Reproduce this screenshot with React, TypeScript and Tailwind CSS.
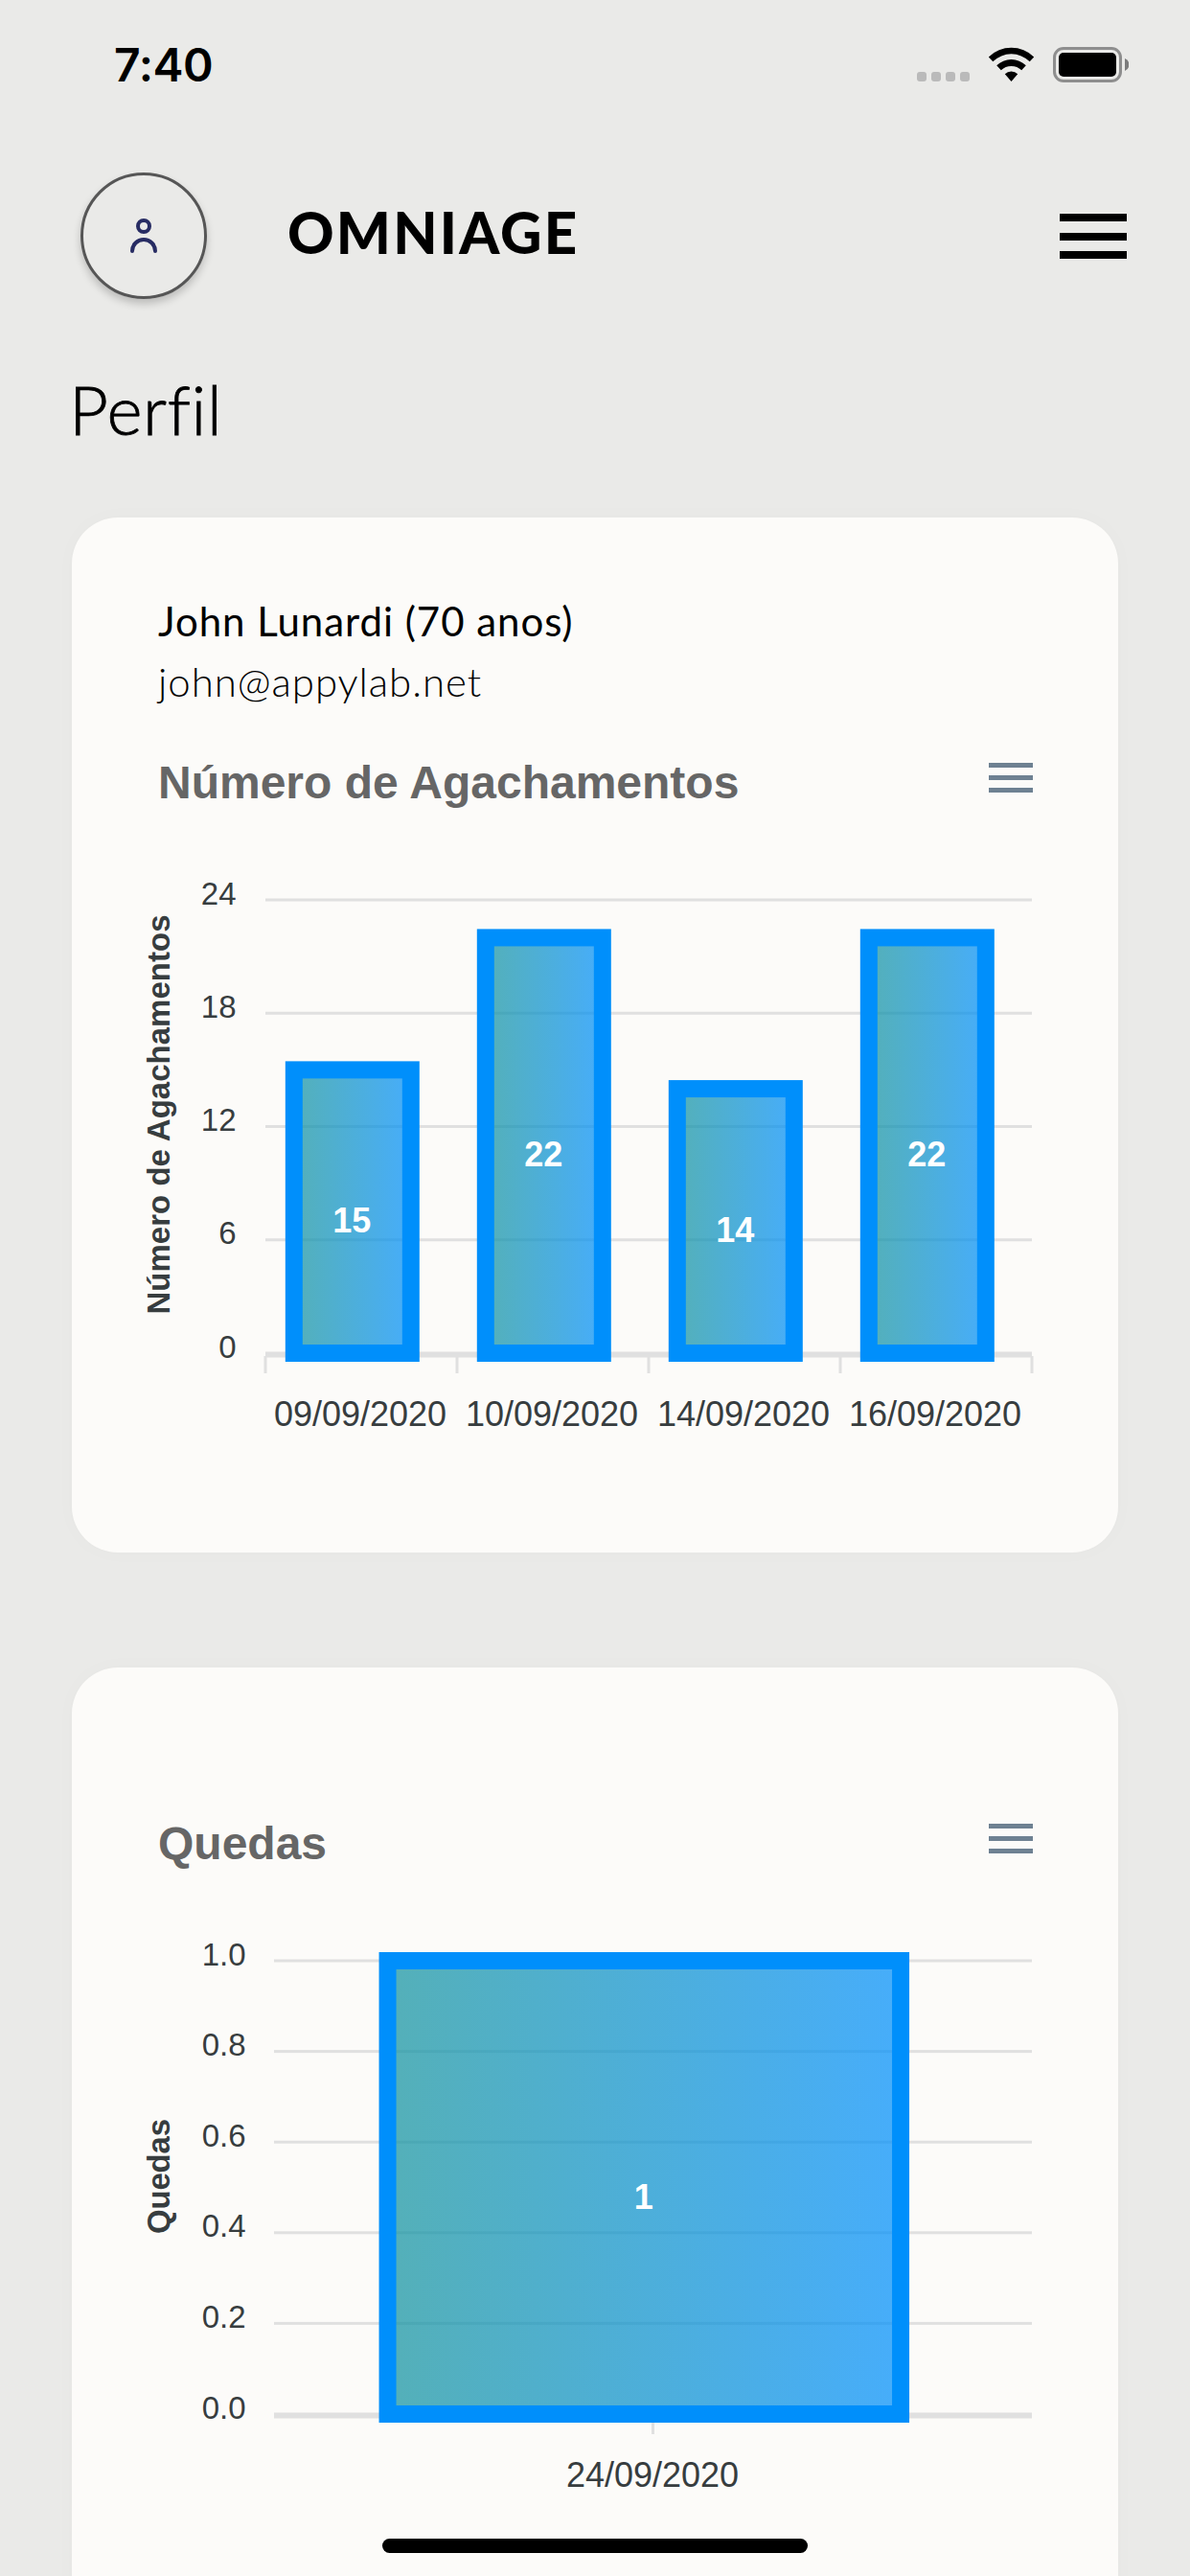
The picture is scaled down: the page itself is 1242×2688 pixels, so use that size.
import React from 'react';

interface BarItem {
  label: string;
  value: number;
}

interface BarChartProps {
  id: string;
  title: string;
  data: BarItem[];
  yLabels: string[];
  max: number;
  plotLeft: number;
  labelRight: number;
  barWidth: number;
  barCenters: number[];
  ticks: number[];
  tickCenters: number[];
  axisTitleWidth: number;
  axisTitleY: number;
}

const PLOT_RIGHT = 1002;
const PLOT_TOP = 159;
const PLOT_HEIGHT = 473;
const ZERO = PLOT_TOP + PLOT_HEIGHT;

function StatusBar() {
  return (
    <div className="flex h-[135px] items-start justify-between pl-[119px] pr-[64px]">
      <span className="mt-[38px] font-['Inter'] text-[48px] font-semibold leading-[60px] tracking-[-0.4px]">7:40</span>
      <div className="mt-[49px] flex items-start">
        <div className="mr-[19px] mt-[26px] flex gap-[5px]">
          {[0, 1, 2, 3].map((i) => (
            <span key={i} className="size-[10px] rounded-[3px] bg-[#bababa]" />
          ))}
        </div>
        <svg className="mr-[19px] h-[37px] w-[49px]" viewBox="0 0 49 37">
          <path d="M0.8 10.4 A34 34 0 0 1 48.2 10.4 L43.7 15.2 A27.4 27.4 0 0 0 5.3 15.2 Z" />
          <path d="M9.2 19.3 A22 22 0 0 1 39.8 19.3 L35.2 24.2 A15.4 15.4 0 0 0 13.8 24.2 Z" />
          <path d="M17.8 28.2 A10 10 0 0 1 31.2 28.2 L24.5 36 Z" />
        </svg>
        <svg className="h-[37px] w-[79px]" viewBox="0 0 79 37">
          <rect x="1.5" y="1.5" width="69" height="34" rx="9.5" fill="none" stroke="#8e8e8e" strokeWidth="3" />
          <rect x="6" y="6" width="60" height="25" rx="5" />
          <path d="M75 12 A7 7 0 0 1 75 25 Z" fill="#7c7c7c" />
        </svg>
      </div>
    </div>
  );
}

function Header() {
  return (
    <header className="flex h-[222px] items-start pl-[84px] pr-[66px]">
      <button className="mt-[45px] flex size-[132px] items-center justify-center rounded-full border-[3px] border-[#565656] shadow-[0_5px_9px_rgba(0,0,0,0.2)]">
        <svg className="h-[36px] w-[30px]" viewBox="0 0 30 36" fill="none" stroke="#272c63" strokeWidth="4" strokeLinecap="round">
          <circle cx="15" cy="8" r="6" />
          <path d="M3 34 A12 12 0 0 1 27 34" />
        </svg>
      </button>
      <h1 className="ml-[84px] mt-[71px] font-['Lato'] text-[60px] font-black leading-[72px] tracking-[2.2px]">OMNIAGE</h1>
      <button className="ml-auto mt-[88px] flex w-[70px] flex-col gap-[11.5px]">
        <span className="h-2 bg-black" />
        <span className="h-2 bg-black" />
        <span className="h-2 bg-black" />
      </button>
    </header>
  );
}

function BarChart(props: BarChartProps) {
  const { id, title, data, yLabels, max, plotLeft, labelRight, barWidth, barCenters, ticks, tickCenters } = props;
  const step = PLOT_HEIGHT / (yLabels.length - 1);

  return (
    <div className="w-full">
      <div className="flex items-start justify-between pl-[90px] pr-[89px]">
        <h2 className="font-['Liberation_Sans'] text-[48px] font-bold leading-[56px] text-[#666666]">{title}</h2>
        <button className="mt-[7px] flex w-[46px] flex-col gap-[7.5px]">
          <span className="h-[5.3px] bg-[#6e8192]" />
          <span className="h-[5.3px] bg-[#6e8192]" />
          <span className="h-[5.3px] bg-[#6e8192]" />
        </button>
      </div>

      {/* Plot area */}
      <svg
        className="-mt-[15px] block h-[740px] w-[1092px] font-['Liberation_Sans']"
        viewBox="0 50 1092 740"
      >
        <defs>
          <linearGradient id={id} x1="0" y1="0" x2="1" y2="0">
            <stop offset="0" stopColor="#13939f" />
            <stop offset="1" stopColor="#008ffb" />
          </linearGradient>
        </defs>

        {yLabels.map((label, i) => (
          <g key={label}>
            {i < yLabels.length - 1 && (
              <rect x={plotLeft} y={PLOT_TOP + step * i - 1.5} width={PLOT_RIGHT - plotLeft} height="3" fill="#e0e0e0" />
            )}
            <text x={labelRight} y={PLOT_TOP + step * i + 4.5} textAnchor="end" fontSize="33" fill="#373d3f">
              {label}
            </text>
          </g>
        ))}

        <rect x={plotLeft} y={ZERO - 1.5} width={PLOT_RIGHT - plotLeft} height="6" fill="#e0e0e0" />
        {ticks.map((x) => (
          <rect key={x} x={x - 1.5} y={ZERO + 3} width="3" height="18" fill="#e0e0e0" />
        ))}

        {data.map((item, i) => {
          const height = (item.value / max) * PLOT_HEIGHT;
          const x = barCenters[i] - barWidth / 2;
          return (
            <g key={item.label}>
              <rect x={x} y={ZERO - height} width={barWidth} height={height} fill={`url(#${id})`} fillOpacity="0.72" />
              <rect x={x} y={ZERO - height} width={barWidth} height={height} fill="none" stroke="#008ffb" strokeWidth="18" />
              <text x={barCenters[i] - 0.5} y={ZERO - height / 2 + 22} textAnchor="middle" fontSize="36" fontWeight="700" fill="#fff">
                {item.value}
              </text>
              <text x={tickCenters[i]} y={ZERO + 75.5} textAnchor="middle" fontSize="36" fill="#373d3f">
                {item.label}
              </text>
            </g>
          );
        })}

        <text
          transform={`translate(101.5 ${props.axisTitleY}) rotate(-90)`}
          textAnchor="middle"
          fontSize="33"
          fontWeight="700"
          textLength={props.axisTitleWidth}
          fill="#373d3f"
        >
          {title}
        </text>
      </svg>
    </div>
  );
}

export default function App() {
  return (
    <div className="relative h-[2688px] w-[1242px] overflow-hidden bg-[#eaeae8] text-black">
      <StatusBar />
      <Header />

      <h1 className="h-[183px] pl-[72px] pt-[26px] font-['Lato'] text-[71px] font-light leading-[88px] tracking-[0.6px] [-webkit-text-stroke:0.8px_black] [font-variant-ligatures:none]">
        Perfil
      </h1>

      <main className="flex flex-col gap-[120px] pl-[75px] pr-[75px]">
        <section className="h-[1080px] rounded-[48px] bg-[#fcfbf9] pt-[77px] shadow-[0_0_24px_rgba(0,0,0,0.02)]">
          <div className="h-[162px] pl-[90px] font-['Lato'] text-[42px] leading-[63px] tracking-[0.95px]">
            <p>John Lunardi (70 anos)</p>
            <p className="font-light">john@appylab.net</p>
          </div>
          <div className="mt-[10px]">
            <BarChart
              id="squats"
              title="Número de Agachamentos"
              data={[
                { label: '09/09/2020', value: 15 },
                { label: '10/09/2020', value: 22 },
                { label: '14/09/2020', value: 14 },
                { label: '16/09/2020', value: 22 },
              ]}
              yLabels={['24', '18', '12', '6', '0']}
              max={24}
              plotLeft={202}
              labelRight={171.5}
              barWidth={122}
              barCenters={[292.8, 492.8, 692.8, 892.8]}
              ticks={[202, 402, 602, 802, 1002]}
              tickCenters={[301, 501, 701, 901]}
              axisTitleWidth={417}
              axisTitleY={383}
            />
          </div>
        </section>

        <section className="h-[1080px] shrink-0 rounded-[48px] bg-[#fcfbf9] pt-[156px] shadow-[0_0_24px_rgba(0,0,0,0.02)]">
          <BarChart
            id="falls"
            title="Quedas"
            data={[{ label: '24/09/2020', value: 1 }]}
            yLabels={['1.0', '0.8', '0.6', '0.4', '0.2', '0.0']}
            max={1}
            plotLeft={211}
            labelRight={181.5}
            barWidth={535.5}
            barCenters={[597.3]}
            ticks={[606.5]}
            tickCenters={[606]}
            axisTitleWidth={120}
            axisTitleY={384}
          />
        </section>
      </main>

      {/* Home indicator */}
      <div className="absolute bottom-[24px] left-[399px] h-[15px] w-[444px] rounded-full bg-black" />
    </div>
  );
}
